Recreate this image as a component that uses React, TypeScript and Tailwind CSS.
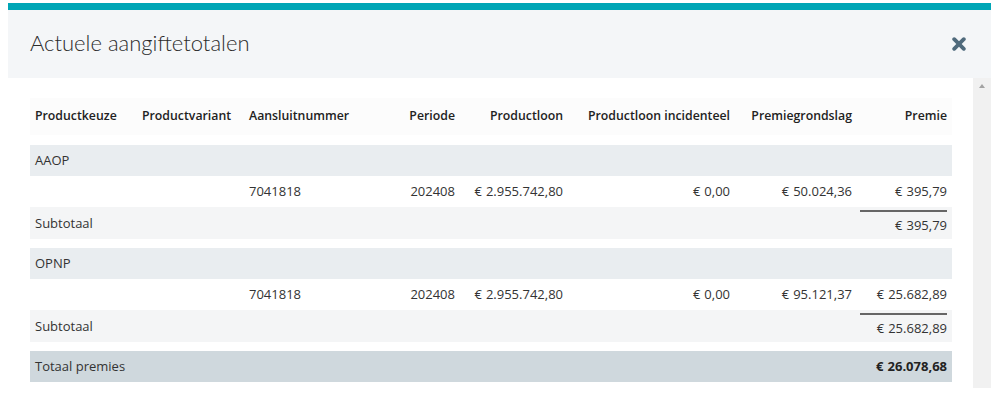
import React from 'react';

const cols = 'grid grid-cols-[107px_107px_146px_70px_108px_167px_122px_95px]';

type Line = {
    nummer: string;
    periode: string;
    loon: string;
    incidenteel: string;
    grondslag: string;
    premie: string;
};

const groups: { name: string; line: Line; subtotal: string }[] = [
    {
        name: 'AAOP',
        line: { nummer: '7041818', periode: '202408', loon: '2.955.742,80', incidenteel: '0,00', grondslag: '50.024,36', premie: '395,79' },
        subtotal: '395,79',
    },
    {
        name: 'OPNP',
        line: { nummer: '7041818', periode: '202408', loon: '2.955.742,80', incidenteel: '0,00', grondslag: '95.121,37', premie: '25.682,89' },
        subtotal: '25.682,89',
    },
];

// euro amount with the slightly wider gap after the sign
const Amount = ({ value }: { value: string }) => (
    <span className="whitespace-nowrap">
        €<span className="ml-[4px]">{value}</span>
    </span>
);

const CloseIcon = () => (
    <svg width="14" height="14" viewBox="0 0 14 14">
        <path d="M2.2 2.2 L11.8 11.8 M11.8 2.2 L2.2 11.8" stroke="#4f6a7c" strokeWidth="3.8" strokeLinecap="round" />
    </svg>
);

const App: React.FC = () => {
    return (
        <div className="w-[991px] h-[394px] overflow-hidden bg-white text-[#333] text-[13px] font-['Open_Sans',sans-serif]">
            <div className="ml-[8px] mt-[3px] border-t-[7px] border-[#00a6b6]">
                {/* Header */}
                <div className="h-[68px] bg-[#f4f6f8] flex items-center justify-between pl-[22px] pr-[25px]">
                    <h1 className="text-[22px] font-light text-[#2b2b2b] font-['Lato',sans-serif] pb-[3px]">Actuele aangiftetotalen</h1>
                    <CloseIcon />
                </div>

                {/* Body */}
                <div className="flex">
                    <div className="w-[965px] pl-[22px] pt-[20px]">
                        <div className="w-[922px]">
                            {/* Column headers */}
                            <div className={`${cols} h-[37px] items-center bg-[#fcfcfc] font-semibold text-[12.3px] text-[#222]`}>
                                <div className="px-[5px]">Productkeuze</div>
                                <div className="px-[5px]">Productvariant</div>
                                <div className="px-[5px]">Aansluitnummer</div>
                                <div className="px-[5px] text-right">Periode</div>
                                <div className="px-[5px] text-right">Productloon</div>
                                <div className="px-[5px] text-right whitespace-nowrap">Productloon incidenteel</div>
                                <div className="px-[5px] text-right">Premiegrondslag</div>
                                <div className="px-[5px] text-right">Premie</div>
                            </div>

                            {groups.map((g, i) => (
                                <div key={g.name} className={i === 0 ? 'mt-[10px]' : 'mt-[9px]'}>
                                    <div className="h-[31px] flex items-center px-[5px] bg-[#e9edf0]">{g.name}</div>
                                    <div className={`${cols} h-[31px] items-center`}>
                                        <div />
                                        <div />
                                        <div className="px-[5px]">{g.line.nummer}</div>
                                        <div className="px-[5px] text-right">{g.line.periode}</div>
                                        <div className="px-[5px] text-right"><Amount value={g.line.loon} /></div>
                                        <div className="px-[5px] text-right"><Amount value={g.line.incidenteel} /></div>
                                        <div className="px-[5px] text-right"><Amount value={g.line.grondslag} /></div>
                                        <div className="px-[5px] text-right"><Amount value={g.line.premie} /></div>
                                    </div>
                                    <div className="h-[32px] flex items-center justify-between bg-[#f4f5f6]">
                                        <span className="px-[5px] pt-[1px]">Subtotaal</span>
                                        <span className="mr-[5px] w-[87px] self-stretch flex items-center justify-end border-t-2 border-[#666] mt-[3px]">
                                            <Amount value={g.subtotal} />
                                        </span>
                                    </div>
                                </div>
                            ))}

                            <div className="mt-[9px] h-[31px] flex items-center justify-between px-[5px] bg-[#cfd8dd]">
                                <span>Totaal premies</span>
                                <span className="font-bold text-[#222]"><Amount value="26.078,68" /></span>
                            </div>
                        </div>
                    </div>

                    {/* Scrollbar */}
                    <div className="w-[18px] h-[310px] bg-[#f1f1f1] flex justify-center pt-[6px]">
                        <div className="w-0 h-0 border-l-[3px] border-r-[3px] border-b-[4px] border-l-transparent border-r-transparent border-b-[#a3a3a3]" />
                    </div>
                </div>
            </div>
        </div>
    );
};

export default App;
